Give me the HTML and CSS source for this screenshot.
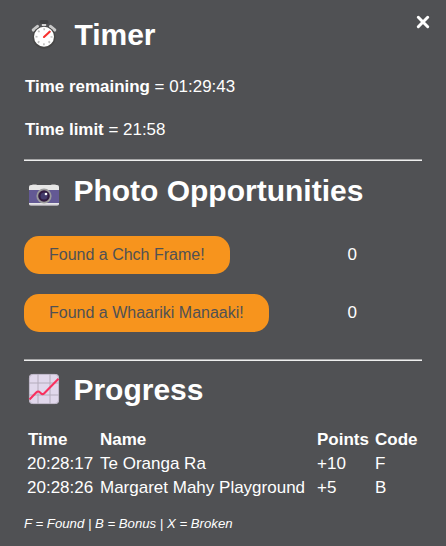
FILE: index.html
```html
<!DOCTYPE html>
<html lang="en">
<head>
<meta charset="utf-8">
<title>Game status</title>
<link rel="stylesheet" href="styles.css">
</head>
<body>
<main class="panel">
  <button class="close" aria-label="Close"><svg viewBox="0 0 14 14" width="14" height="14"><path d="M2.3 2.3 11.7 11.7M11.7 2.3 2.3 11.7"/></svg></button>
  <section class="timer">
    <h2><svg class="icon" viewBox="0 0 32 32"><path d="M11.500 3Q11.500 1 13.500 1H18.500Q20.500 1 20.500 3V4.500H18.500V7H13.500V4.500H11.500Z" fill="#404143"/><path d="M13.800 5h4.400v2.600h-4.400z" fill="#d3d3d3"/><path d="M5.300 11 9.500 7.500M26.700 11 22.500 7.500" stroke="#c8c8c8" stroke-width="3.200" stroke-linecap="round"/><circle cx="16" cy="18.300" r="11.400" fill="#464646"/><circle cx="16" cy="17.800" r="10" fill="#fff"/><circle cx="16" cy="17.800" r="7.500" fill="none" stroke="#bdbdbd" stroke-width="2" stroke-dasharray="1.700 4.190" stroke-dashoffset=".85"/><path d="m16 18 5.700-5.200" stroke="#f8312f" stroke-width="2.100" stroke-linecap="round"/></svg><span>Timer</span></h2>
    <p><b>Time remaining</b> = 01:29:43</p>
    <p><b>Time limit</b> = 21:58</p>
  </section>
  <hr>
  <section class="photos">
    <h2><svg class="icon" viewBox="0 0 32 32"><path d="M4 7V6.200Q4 5.200 5 5.200H8Q9 5.200 9 6.200V7M23 7V6.200Q23 5.200 24 5.200H27Q28 5.200 28 6.200V7" fill="#aaa"/><rect x="1" y="6" width="30" height="20" rx="2" fill="#e6e6e6"/><path d="M1 11h30v13H1z" fill="#635994"/><path d="M1 24h30v.5q0 2-2 2H3q-2 0-2-2z" fill="#e6e6e6"/><path d="M1.500 26h29" stroke="#b4acbc" stroke-width=".7"/><circle cx="16" cy="17" r="7.600" fill="#9b9b9b"/><circle cx="16" cy="17" r="5.800" fill="#321b41"/><circle cx="16" cy="17" r="3.500" fill="#433b6b"/><circle cx="18" cy="15" r="1.300" fill="#fff"/></svg><span>Photo Opportunities</span></h2>
    <div class="row"><button class="found">Found a Chch Frame!</button><span class="count">0</span></div>
    <div class="row"><button class="found">Found a Whaariki Manaaki!</button><span class="count">0</span></div>
  </section>
  <hr>
  <section class="progress">
    <h2><svg class="icon" viewBox="0 0 32 32"><rect x="1" y="1" width="30" height="30" rx="4" fill="#e1d8ec"/><path d="M10 1v30M22 1v30M1 10h30M1 22h30" stroke="#b4acbc"/><rect x="1.400" y="1.400" width="29.200" height="29.200" rx="3.600" fill="none" stroke="#b4acbc" stroke-width=".8"/><path d="m1.500 26.500 6.700-7q2-2 3.900 0l1 1q1.500 1.500 3.200-.2L30.500 5.800" fill="none" stroke="#f8315f" stroke-width="2.100"/></svg><span>Progress</span></h2>
    <table>
      <thead><tr><th>Time</th><th>Name</th><th>Points</th><th>Code</th></tr></thead>
      <tbody>
        <tr><td>20:28:17</td><td>Te Oranga Ra</td><td>+10</td><td>F</td></tr>
        <tr><td>20:28:26</td><td>Margaret Mahy Playground</td><td>+5</td><td>B</td></tr>
      </tbody>
    </table>
    <p class="legend">F = Found | B = Bonus | X = Broken</p>
  </section>
</main>
</body>
</html>
```
FILE: styles.css
```css
* { box-sizing: border-box; }
body { margin: 0; background: #505154; color: #fff; font: 17px/20px "Liberation Sans", Arial, sans-serif; }
.panel { position: relative; height: 546px; padding: 0 24px; overflow: hidden; }
.close { position: absolute; top: 15px; right: 16px; width: 14px; height: 14px; padding: 0; border: 0; background: none; }
.close svg { display: block; fill: none; stroke: #fff; stroke-width: 3; stroke-linecap: round; }
h2 { display: flex; align-items: center; margin: 0; height: 36px; font-size: 30px; line-height: 36px; }
.icon { width: 32px; height: 32px; margin: 0 13px 0 4.4px; flex: none; }
p { margin: 0 0 0 1px; font-size: 16.95px; }
.timer { height: 159px; padding-top: 17px; }
.timer .icon { margin-right: 14px; }
.timer h2 + p { margin-top: 24px; }
.timer p + p { margin-top: 23px; }
hr { height: 2px; margin: 0; border: 0; border-top: 1px solid #a5a5a6; background: #eee; }
.photos { height: 198px; padding-top: 12px; }
.photos h2 { margin-bottom: 27px; }
.photos .icon { margin-top: 8px; }
.row { display: flex; align-items: center; height: 38px; margin-bottom: 20px; }
.found { height: 38px; padding: 0 25px; border: 0; border-radius: 15px; background: #f7941d; color: #505154; font: 16px "Liberation Sans", Arial, sans-serif; }
.count { margin-left: auto; margin-right: 65px; }
.progress { padding-top: 11px; }
.progress .icon { margin-top: -2px; }
table { margin: 20px 0 0 2px; width: 398px; table-layout: fixed; border-collapse: collapse; }
th, td { height: 24px; padding: 0 0 0 1px; text-align: left; white-space: nowrap; }
th:nth-child(1) { width: 73px; padding-left: 2px; }
th:nth-child(2) { width: 217px; }
th:nth-child(3) { width: 58px; }
.legend { margin: 14px 0 0; font-size: 13.2px; font-style: italic; }
```
